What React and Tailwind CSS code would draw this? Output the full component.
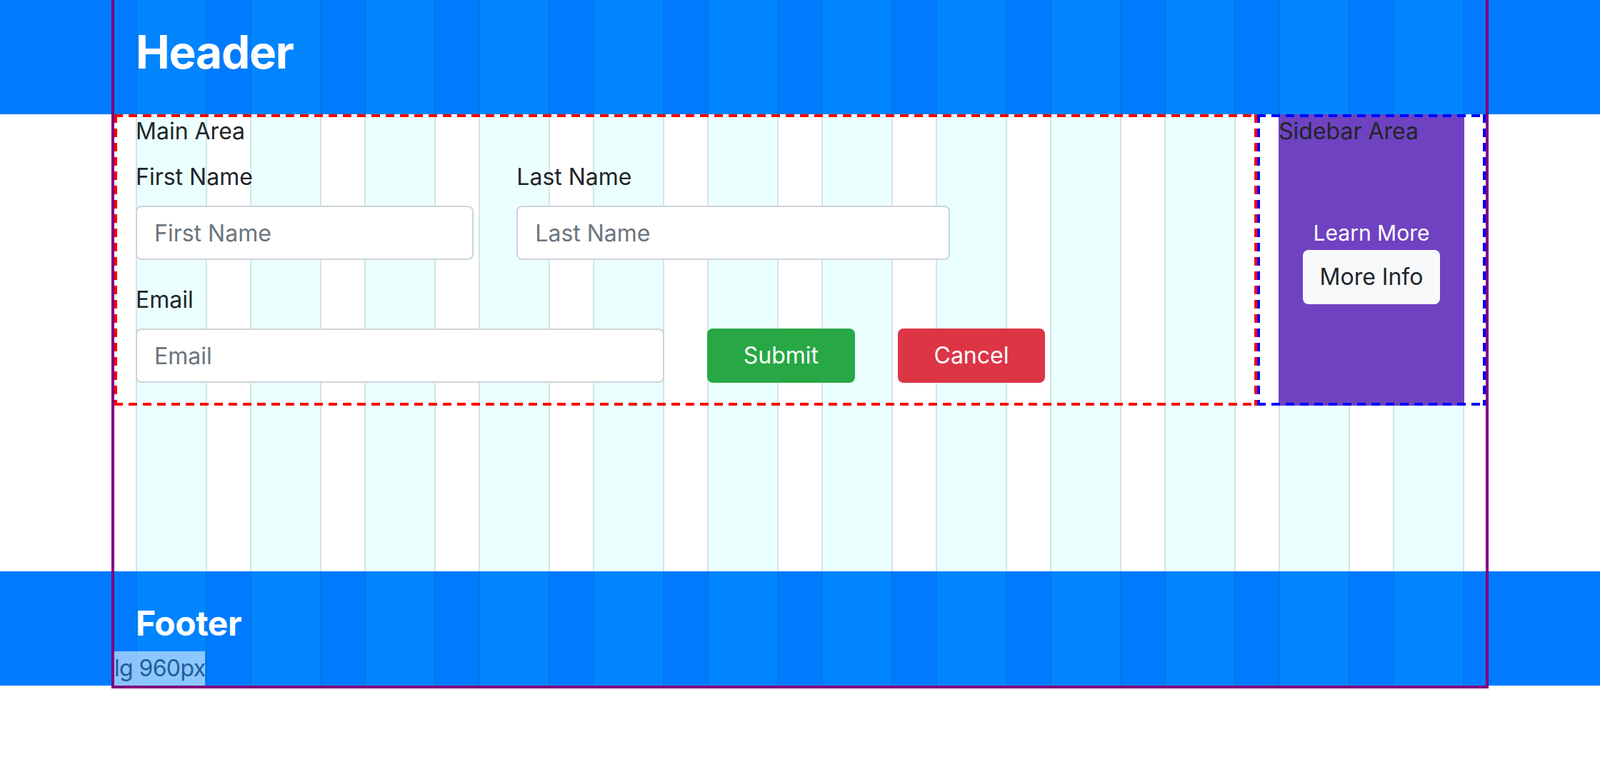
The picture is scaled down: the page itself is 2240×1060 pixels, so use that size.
const COLS = Array.from({ length: 12 });

const DASH = {
  red: {
    h: "bg-[repeating-linear-gradient(90deg,#ff0000_0_12px,transparent_12px_20px)]",
    v: "bg-[repeating-linear-gradient(180deg,#ff0000_0_12px,transparent_12px_20px)]",
  },
  blue: {
    h: "bg-[repeating-linear-gradient(90deg,#0000ff_0_12px,transparent_12px_20px)]",
    v: "bg-[repeating-linear-gradient(180deg,#0000ff_0_12px,transparent_12px_20px)]",
  },
};

// dashed debug frame drawn over a box
function DashedFrame({ color }) {
  const d = DASH[color];
  return (
    <>
      <span className={`pointer-events-none absolute inset-x-0 top-0 h-[4px] ${d.h}`} />
      <span className={`pointer-events-none absolute inset-x-0 bottom-0 h-[4px] ${d.h}`} />
      <span className={`pointer-events-none absolute inset-y-0 left-0 w-[4px] ${d.v}`} />
      <span className={`pointer-events-none absolute inset-y-0 right-0 w-[4px] ${d.v}`} />
    </>
  );
}

function GridOverlay() {
  return (
    <div className="pointer-events-none absolute inset-x-0 top-0 z-0">
      <div className="mx-auto h-[964px] w-[1928px] border-x-4 border-b-4 border-[#800080] px-[30px]">
        <div className="grid h-full grid-cols-12 gap-x-[60px]">
          {COLS.map((_, i) => (
            <div key={i} className="h-full border-x-2 border-[rgba(0,0,0,0.1)] bg-[rgba(0,255,255,0.08)]" />
          ))}
        </div>
      </div>
    </div>
  );
}

function Field({ label, type = "text", className }) {
  return (
    <div className={className}>
      <label className="mb-4 block text-[32px] leading-[48px]">{label}</label>
      <input
        type={type}
        placeholder={label}
        className="block h-[76px] w-full rounded-[8px] border-2 border-[#ced4da] bg-white px-[24px] text-[32px] text-[#495057] outline-none placeholder:text-[#6c757d]"
      />
    </div>
  );
}

export default function App() {
  return (
    <div className="relative min-h-screen bg-white font-[Inter,sans-serif] text-[#212529]">
      <GridOverlay />

      <header className="h-[160px] bg-[#007bff]">
        <div className="relative z-10 mx-auto w-[1920px] px-[30px] pt-[35px]">
          <h1 className="text-[64px] font-bold leading-[1.2] tracking-[-0.02em] text-white">Header</h1>
        </div>
      </header>

      <div className="h-[640px]">
        <div className="relative z-10 mx-auto flex w-[1920px]">
          <section className="relative w-[1600px] px-[30px] pb-[32px]">
            <p className="mb-4 text-[32px] leading-[48px]">Main Area</p>
            <div className="mb-8 grid grid-cols-12 gap-x-[60px]">
              <Field label="First Name" className="col-span-4" />
              <Field label="Last Name" className="col-span-5" />
            </div>
            <div className="grid grid-cols-12 items-end gap-x-[60px]">
              <Field label="Email" type="email" className="col-span-6" />
              <button className="col-span-2 h-[76px] rounded-[8px] bg-[#28a745] text-[32px] text-white">Submit</button>
              <button className="col-span-2 h-[76px] rounded-[8px] bg-[#dc3545] text-[32px] text-white">Cancel</button>
            </div>
            <DashedFrame color="red" />
          </section>

          <aside className="relative w-[320px] px-[30px]">
            <div className="relative flex h-full flex-col items-center justify-center bg-[#6f42c1]">
              <span className="absolute left-0 top-0 text-[32px] leading-[48px] text-[#212529]">Sidebar Area</span>
              <p className="text-[30px] leading-[48px] text-white">Learn More</p>
              <button className="h-[76px] rounded-[8px] bg-[#f8f9fa] px-[24px] text-[32px] text-[#212529]">More Info</button>
            </div>
            <DashedFrame color="blue" />
          </aside>
        </div>
      </div>

      <footer className="h-[160px] bg-[#007bff]">
        <div className="relative z-10 mx-auto h-full w-[1920px] px-[30px] pt-[44px]">
          <h2 className="text-[48px] font-bold leading-[1.2] tracking-[-0.01em] text-white">Footer</h2>
          <span className="absolute bottom-0 left-0 bg-[rgba(255,255,255,0.55)] text-[32px] leading-[48px] tracking-[-0.02em] text-[#235c9a]">lg 960px</span>
        </div>
      </footer>
    </div>
  );
}
